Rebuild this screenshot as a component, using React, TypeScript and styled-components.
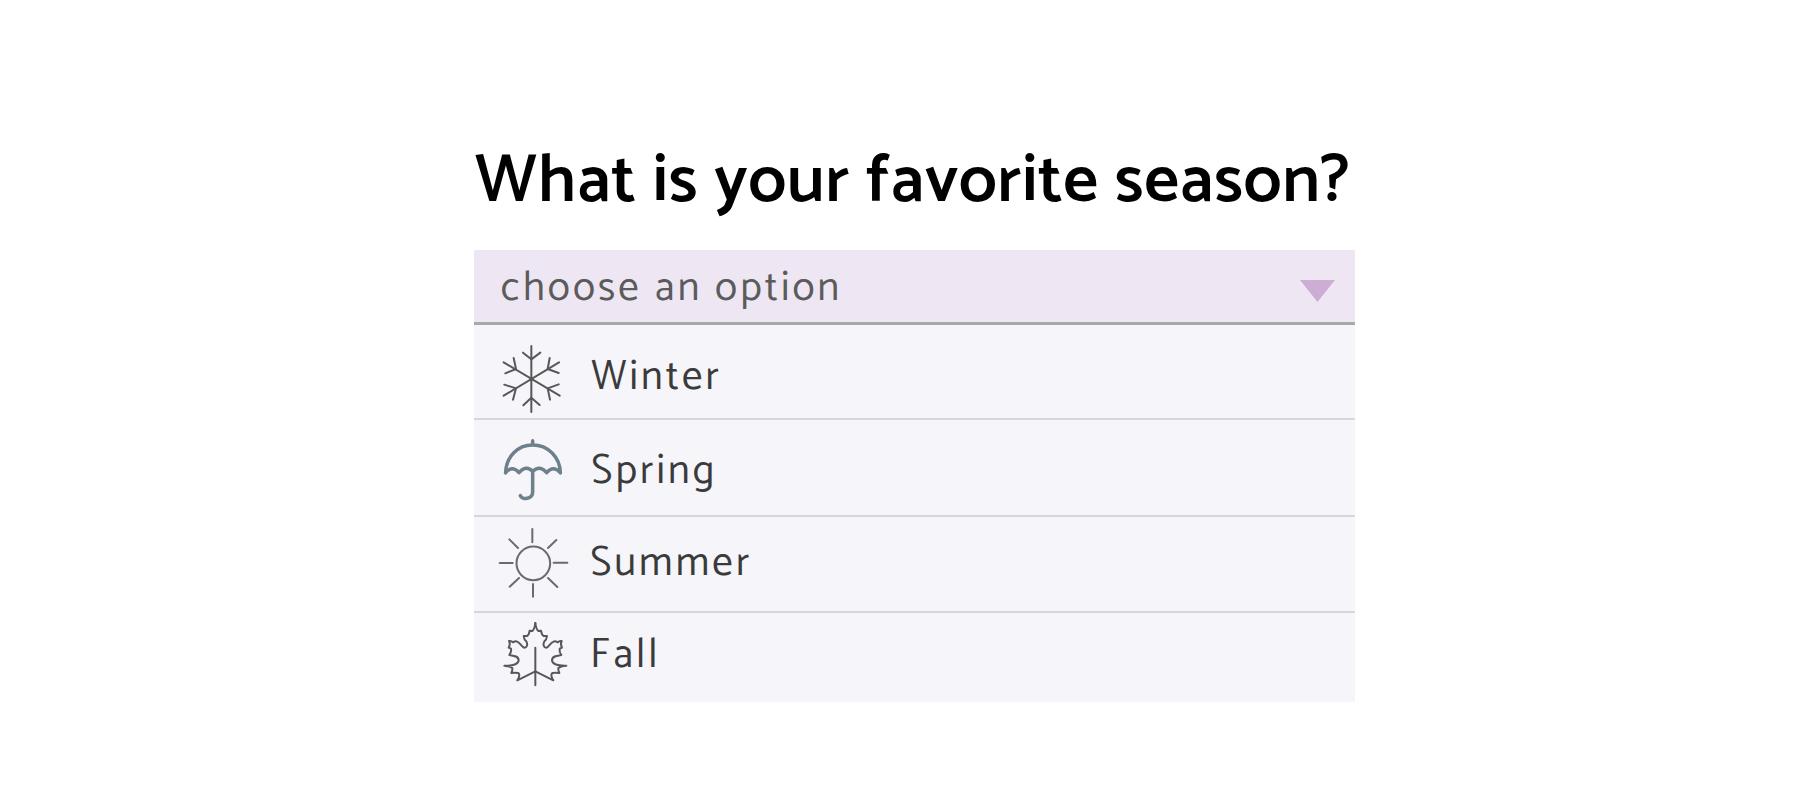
import React from "react";
import styled, { createGlobalStyle } from "styled-components";

const GlobalStyle = createGlobalStyle`
  body {
    margin: 0;
    background: #fff;
    font-family: Catamaran, "Noto Sans", "Open Sans", sans-serif;
  }
`;

const Page = styled.main`
  box-sizing: border-box;
  width: 1800px;
  height: 800px;
  padding: 134px 445px 0 474.3px;
  overflow: hidden;
`;

const Title = styled.h1`
  margin: 0;
  padding: 4px 0 0 0.5px;
  box-sizing: border-box;
  height: 116px;
  font-size: 68.5px;
  font-weight: 600;
  line-height: 88px;
  letter-spacing: 0.5px;
  white-space: nowrap;
  color: #000;
`;

const Dropdown = styled.section`
  width: 880.7px;
  background: #f6f5fa;
`;

const Trigger = styled.div`
  box-sizing: border-box;
  display: flex;
  justify-content: space-between;
  align-items: flex-start;
  height: 75px;
  padding: 0 20px 0 26.5px;
  background: #eee7f3;
  border-bottom: 3px solid #a9a8ad;
`;

const Placeholder = styled.span`
  margin-top: 13px;
  font-size: 41px;
  line-height: 52px;
  letter-spacing: 3.1px;
  color: #5b5b5c;
`;

const Arrow = styled.svg`
  display: block;
  width: 35px;
  height: 22px;
  margin-top: 30px;
`;

const List = styled.ul`
  margin: 0;
  padding: 0;
  list-style: none;
`;

const Option = styled.li<{ $height: number }>`
  box-sizing: border-box;
  display: flex;
  align-items: flex-start;
  height: ${(p) => p.$height}px;
  padding-left: 15.7px;
  border-bottom: 2px solid #d8d6da;
  &:last-child {
    border-bottom: 0;
  }
`;

const Icon = styled.svg<{ $top: number }>`
  flex: none;
  width: 90px;
  height: 76px;
  margin-top: ${(p) => p.$top}px;
  fill: none;
  stroke-linecap: round;
  stroke-linejoin: round;
`;

const Label = styled.span<{ $top: number; $left: number }>`
  margin: ${(p) => p.$top}px 0 0 ${(p) => p.$left}px;
  font-size: 41px;
  line-height: 52px;
  letter-spacing: 3.1px;
  color: #3b3b3c;
`;

const leafHalf =
  "M136 39 Q138 57 145 63 L153 62 Q155 75 161 78 L171 78 Q170 89 163 94 C158 104 161 113 169 113 C178 111 180 99 191 95 Q195 92 203 97 Q207 92 215 93 Q210 102 216 113 L209 116 Q207 125 214 135 C202 137 186 138 186 151 C186 162 203 168 229 167 Q211 169 205 174 Q204 180 208 189 Q198 188 187 189 Q180 195 190 211 L136 184";

const seasons = [
  {
    name: "Winter",
    height: 95,
    iconTop: 18,
    labelTop: 27,
    labelLeft: 11.3,
    icon: (
      <g stroke="#58585a" strokeWidth={6}>
        <path d="M124 33V231M41 82L209 182M207 82L41 182" />
        <path d="M99 53L124 73L151 53M100 211L124 188L149 210" />
        <path d="M71 69L78 102L46 115M179 69L173 102L206 114" />
        <path d="M43 149L78 160L69 194M206 148L173 160L180 194" />
      </g>
    ),
  },
  {
    name: "Spring",
    height: 97,
    iconTop: 13,
    labelTop: 26,
    labelLeft: 11.3,
    icon: (
      <g stroke="#6d808b" strokeWidth={10.5}>
        <path d="M128 47V58M47 143C48 96 82 60 128 60S210 96 211 143" />
        <path d="M47 143Q67 119 87 143Q108 118 128 139Q149 118 170 143Q190 119 211 143" />
        <path d="M128 139V201C128 224 97 225 91 212" />
      </g>
    ),
  },
  {
    name: "Summer",
    height: 96,
    iconTop: 6,
    labelTop: 21,
    labelLeft: 10.2,
    icon: (
      <g stroke="#6b6b6e" strokeWidth={6}>
        <circle cx={130} cy={145} r={50.5} />
        <path d="M127 42V82M129 207V245M29 144H68M191 143H232M58 73L84 99M199 75L174 99M59 215L87 189M174 189L202 216" />
      </g>
    ),
  },
  {
    name: "Fall",
    height: 89,
    iconTop: 5,
    labelTop: 17,
    labelLeft: 10.1,
    icon: (
      <g stroke="#58585a" strokeWidth={6}>
        <path d={leafHalf} />
        <path d={leafHalf} transform="translate(272 0) scale(-1 1)" />
        <path d="M136 113V226" />
      </g>
    ),
  },
];

export default function App() {
  return (
    <Page>
      <GlobalStyle />
      <Title>What is your favorite season?</Title>
      <Dropdown>
        <Trigger>
          <Placeholder>choose an option</Placeholder>
          <Arrow viewBox="0 0 35 22">
            <path d="M0 0H35L17.5 22Z" fill="#ccaed4" />
          </Arrow>
        </Trigger>
        <List>
          {seasons.map((s) => (
            <Option key={s.name} $height={s.height}>
              <Icon viewBox="0 24 270 228" $top={s.iconTop}>
                {s.icon}
              </Icon>
              <Label $top={s.labelTop} $left={s.labelLeft}>
                {s.name}
              </Label>
            </Option>
          ))}
        </List>
      </Dropdown>
    </Page>
  );
}
